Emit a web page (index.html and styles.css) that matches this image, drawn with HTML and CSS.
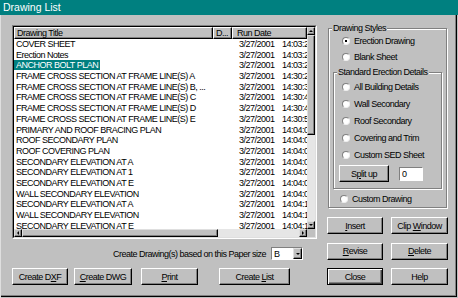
FILE: index.html
```html
<!DOCTYPE html>
<html lang="en">
  <head>
    <meta charset="UTF-8" />
    <title>Drawing List</title>
    <link rel="stylesheet" href="styles.css">
  </head>
  <body>
    <div class="window">
      <div class="titlebar">Drawing List</div>
      <div class="main">
        <div class="left">
          <div class="listbox">
            <div class="listbox-inner">
              <div class="list-area">
                <div class="list-header">
                  <span class="hcol col-title">Drawing Title</span>
                  <span class="hcol col-d">D...</span>
                  <span class="hcol col-date">Run Date</span>
                </div>
                <div class="row"><span class="c-title"><span>COVER SHEET</span></span><span class="c-d"></span><span class="c-date">3/27/2001</span><span class="c-time">14:03:21</span></div>
                <div class="row"><span class="c-title"><span>Erection Notes</span></span><span class="c-d"></span><span class="c-date">3/27/2001</span><span class="c-time">14:03:22</span></div>
                <div class="row"><span class="c-title"><span class="selected">ANCHOR BOLT PLAN</span></span><span class="c-d"></span><span class="c-date">3/27/2001</span><span class="c-time">14:03:27</span></div>
                <div class="row"><span class="c-title"><span>FRAME CROSS SECTION AT FRAME LINE(S) A</span></span><span class="c-d"></span><span class="c-date">3/27/2001</span><span class="c-time">14:30:22</span></div>
                <div class="row"><span class="c-title"><span>FRAME CROSS SECTION AT FRAME LINE(S) B, ...</span></span><span class="c-d"></span><span class="c-date">3/27/2001</span><span class="c-time">14:30:31</span></div>
                <div class="row"><span class="c-title"><span>FRAME CROSS SECTION AT FRAME LINE(S) C</span></span><span class="c-d"></span><span class="c-date">3/27/2001</span><span class="c-time">14:30:40</span></div>
                <div class="row"><span class="c-title"><span>FRAME CROSS SECTION AT FRAME LINE(S) D</span></span><span class="c-d"></span><span class="c-date">3/27/2001</span><span class="c-time">14:30:49</span></div>
                <div class="row"><span class="c-title"><span>FRAME CROSS SECTION AT FRAME LINE(S) E</span></span><span class="c-d"></span><span class="c-date">3/27/2001</span><span class="c-time">14:30:58</span></div>
                <div class="row"><span class="c-title"><span>PRIMARY AND ROOF BRACING PLAN</span></span><span class="c-d"></span><span class="c-date">3/27/2001</span><span class="c-time">14:04:01</span></div>
                <div class="row"><span class="c-title"><span>ROOF SECONDARY PLAN</span></span><span class="c-d"></span><span class="c-date">3/27/2001</span><span class="c-time">14:04:03</span></div>
                <div class="row"><span class="c-title"><span>ROOF COVERING PLAN</span></span><span class="c-d"></span><span class="c-date">3/27/2001</span><span class="c-time">14:04:05</span></div>
                <div class="row"><span class="c-title"><span>SECONDARY ELEVATION AT A</span></span><span class="c-d"></span><span class="c-date">3/27/2001</span><span class="c-time">14:04:07</span></div>
                <div class="row"><span class="c-title"><span>SECONDARY ELEVATION AT 1</span></span><span class="c-d"></span><span class="c-date">3/27/2001</span><span class="c-time">14:04:09</span></div>
                <div class="row"><span class="c-title"><span>SECONDARY ELEVATION AT E</span></span><span class="c-d"></span><span class="c-date">3/27/2001</span><span class="c-time">14:04:09</span></div>
                <div class="row"><span class="c-title"><span>WALL SECONDARY ELEVATION</span></span><span class="c-d"></span><span class="c-date">3/27/2001</span><span class="c-time">14:04:09</span></div>
                <div class="row"><span class="c-title"><span>SECONDARY ELEVATION AT A</span></span><span class="c-d"></span><span class="c-date">3/27/2001</span><span class="c-time">14:04:11</span></div>
                <div class="row"><span class="c-title"><span>WALL SECONDARY ELEVATION</span></span><span class="c-d"></span><span class="c-date">3/27/2001</span><span class="c-time">14:04:12</span></div>
                <div class="row"><span class="c-title"><span>SECONDARY ELEVATION AT E</span></span><span class="c-d"></span><span class="c-date">3/27/2001</span><span class="c-time">14:04:13</span></div>
              </div>
              <div class="vscroll">
                <span class="arrow arrow-up"></span>
                <span class="vthumb"></span>
                <span class="track"></span>
                <span class="arrow arrow-down"></span>
              </div>
              <div class="hscroll">
                <span class="arrow arrow-left"></span>
                <span class="hthumb"></span>
                <span class="track"></span>
                <span class="arrow arrow-right"></span>
              </div>
              <div class="corner"></div>
            </div>
          </div>

          <div class="paper-row">
            <span>Create Drawing(s) based on this Paper size</span>
            <div class="combo">
              <span class="combo-value">B</span>
              <span class="arrow arrow-down"></span>
            </div>
          </div>

          <div class="bottom-buttons">
            <button class="btn w-dxf">Create D<u>X</u>F</button>
            <button class="btn w-dwg"><u>C</u>reate DWG</button>
            <button class="btn w-print"><u>P</u>rint</button>
            <button class="btn w-list">Create <u>L</u>ist</button>
          </div>
        </div>

        <div class="right">
          <fieldset class="group outer-group">
            <legend>Drawing Styles</legend>
            <div class="radio-row"><span class="radio checked"></span>Erection Drawing</div>
            <div class="radio-row"><span class="radio"></span>Blank Sheet</div>
            <fieldset class="group inner-group">
              <legend>Standard Erection Details</legend>
              <div class="radio-row tall"><span class="radio"></span>All Building Details</div>
              <div class="radio-row tall"><span class="radio"></span>Wall Secondary</div>
              <div class="radio-row tall"><span class="radio"></span>Roof Secondary</div>
              <div class="radio-row tall"><span class="radio"></span>Covering and Trim</div>
              <div class="radio-row tall"><span class="radio"></span>Custom SED Sheet</div>
              <div class="split-row">
                <button class="btn split-btn">S<u>p</u>lit up</button>
                <div class="edit">0</div>
              </div>
            </fieldset>
            <div class="radio-row custom-row"><span class="radio"></span>Custom Drawing</div>
          </fieldset>

          <div class="side-buttons">
            <button class="btn"><u>I</u>nsert</button>
            <button class="btn">Clip <u>W</u>indow</button>
            <button class="btn"><u>R</u>evise</button>
            <button class="btn"><u>D</u>elete</button>
            <button class="btn default">Close</button>
            <button class="btn">Help</button>
          </div>
        </div>
      </div>
    </div>
  </body>
</html>
```

FILE: styles.css
```css
body {
  margin: 0;
  background-color: #c0c0c0;
  font-family: "Liberation Sans", Arial, sans-serif;
  font-size: 9px;
  letter-spacing: -0.5px;
  color: #000;
}
.window {
  width: 458px;
  height: 298px;
  box-sizing: border-box;
  background-color: #c0c0c0;
  box-shadow: inset 1px 0 0 #dfdfdf, inset -1px -1px 0 #c0c0c0, inset -2px -2px 0 #000, inset -3px -3px 0 #808080;
  overflow: hidden;
}
.titlebar {
  height: 15px;
  line-height: 15px;
  background-color: #008080;
  color: #fff;
  font-size: 10.5px;
  letter-spacing: 0;
  padding-left: 3px;
}
.main {
  display: flex;
  gap: 10px;
  padding: 10px 0 0 12px;
}
.left {
  width: 305px;
  display: flex;
  flex-direction: column;
}

/* list view */
.listbox {
  height: 214px;
  box-sizing: border-box;
  border: 1px solid;
  border-color: #808080 #fff #fff #808080;
}
.listbox-inner {
  height: 100%;
  box-sizing: border-box;
  border: 1px solid;
  border-color: #000 #dfdfdf #dfdfdf #000;
  display: grid;
  grid-template-columns: 293px 8px;
  grid-template-rows: 202px 8px;
}
.list-area {
  background-color: #fff;
  overflow: hidden;
}
.list-header {
  display: flex;
  height: 12px;
}
.hcol {
  box-sizing: border-box;
  height: 12px;
  line-height: 10px;
  background-color: #c0c0c0;
  border: 1px solid;
  border-color: #fff #000 #000 #fff;
  box-shadow: inset -1px -1px 0 #808080;
  white-space: nowrap;
  overflow: hidden;
}
.col-title {
  width: 199px;
  padding-left: 2px;
}
.col-d {
  width: 19px;
  padding-left: 2px;
}
.col-date {
  flex: 1;
  padding-left: 4px;
}
.row {
  display: flex;
  height: 10.7px;
  line-height: 10.7px;
  white-space: nowrap;
}
.c-title {
  width: 199px;
  flex: none;
  overflow: hidden;
}
.c-title span {
  padding: 0 2px;
}
.c-title .selected {
  background-color: #008080;
  color: #fff;
}
.c-d {
  width: 19px;
  flex: none;
}
.c-date {
  width: 50px;
  flex: none;
  box-sizing: border-box;
  padding-left: 7px;
}
.c-time {
  flex: none;
}

/* scrollbars */
.vscroll {
  display: flex;
  flex-direction: column;
}
.hscroll {
  display: flex;
}
.track {
  flex: 1;
  background-color: #e6e6e6;
}
.vthumb,
.hthumb,
.arrow {
  box-sizing: border-box;
  background-color: #c0c0c0;
  border: 1px solid;
  border-color: #dfdfdf #000 #000 #dfdfdf;
  box-shadow: inset -1px -1px 0 #808080;
}
.vthumb {
  height: 100px;
}
.hthumb {
  width: 196px;
}
.arrow {
  width: 8px;
  height: 8px;
  flex: none;
  display: flex;
  align-items: center;
  justify-content: center;
}
.arrow::after {
  content: "";
  width: 0;
  height: 0;
  border: 2px solid transparent;
}
.arrow-up::after {
  border-bottom-color: #000;
  border-top-width: 0;
}
.arrow-down::after {
  border-top-color: #000;
  border-bottom-width: 0;
}
.arrow-left::after {
  border-right-color: #000;
  border-left-width: 0;
}
.arrow-right::after {
  border-left-color: #000;
  border-right-width: 0;
}
.corner {
  background-color: #c0c0c0;
}

/* paper size */
.paper-row {
  margin-top: 8px;
  height: 13px;
  display: flex;
  align-items: center;
  justify-content: flex-end;
  gap: 5px;
  padding-right: 14px;
}
.combo {
  width: 32px;
  height: 13px;
  box-sizing: border-box;
  border: 1px solid;
  border-color: #808080 #fff #fff #808080;
  background-color: #fff;
  display: flex;
  align-items: center;
}
.combo-value {
  flex: 1;
  padding-left: 2px;
}
.combo .arrow {
  width: 9px;
  height: 11px;
}

/* buttons */
.btn {
  box-sizing: border-box;
  height: 17px;
  padding: 0;
  margin: 0;
  font: inherit;
  letter-spacing: inherit;
  color: #000;
  background-color: #c0c0c0;
  border: 1px solid;
  border-color: #fff #000 #000 #fff;
  box-shadow: inset -1px -1px 0 #808080;
  white-space: nowrap;
}
.btn.default {
  border-color: #000;
  box-shadow: inset 1px 1px 0 #fff, inset -1px -1px 0 #404040, inset -2px -2px 0 #808080;
}
.bottom-buttons {
  margin-top: 8px;
  display: flex;
}
.w-dxf {
  width: 56px;
}
.w-dwg {
  width: 58px;
  margin-left: 6px;
}
.w-print {
  width: 57px;
  margin-left: 9px;
}
.w-list {
  width: 71px;
  margin-left: 21px;
}

/* right side */
.right {
  width: 121px;
  display: flex;
  flex-direction: column;
}
.group {
  margin: 0;
  padding: 0;
  min-width: 0;
  border: 1px solid #808080;
  box-shadow: inset 1px 1px 0 #fff, 1px 1px 0 #fff;
}
.group legend {
  margin-left: 3px;
  padding: 0 1px;
  line-height: 10px;
  white-space: nowrap;
  background-color: #c0c0c0;
}
.outer-group {
  margin: -2px 0 0 1px;
  width: 119px;
  box-sizing: border-box;
}
.inner-group {
  margin: 2px 4px 0 4px;
  padding: 1px 0 6px;
}
.radio-row {
  height: 16px;
  display: flex;
  align-items: center;
  padding-left: 13px;
  white-space: nowrap;
}
.radio-row.tall {
  height: 17px;
  padding-left: 8px;
}
.custom-row {
  margin-top: 2px;
  padding-left: 11px;
}
.radio {
  width: 8px;
  height: 8px;
  flex: none;
  box-sizing: border-box;
  border-radius: 50%;
  border: 1px solid;
  border-color: #808080 #eee #eee #808080;
  background-color: #fff;
  margin-right: 4px;
  display: flex;
  align-items: center;
  justify-content: center;
}
.radio.checked::after {
  content: "";
  width: 2px;
  height: 2px;
  background-color: #000;
}
.split-row {
  margin-top: 2px;
  padding-left: 5px;
  display: flex;
  align-items: center;
  gap: 10px;
}
.split-btn {
  width: 50px;
}
.edit {
  width: 24px;
  height: 14px;
  box-sizing: border-box;
  border: 1px solid;
  border-color: #808080 #fff #fff #808080;
  background-color: #fff;
  padding-left: 2px;
  line-height: 12px;
}
.side-buttons {
  margin-top: 9px;
  display: grid;
  grid-template-columns: 56px 57px;
  grid-auto-rows: 17px;
  column-gap: 8px;
  row-gap: 8.5px;
}
```
